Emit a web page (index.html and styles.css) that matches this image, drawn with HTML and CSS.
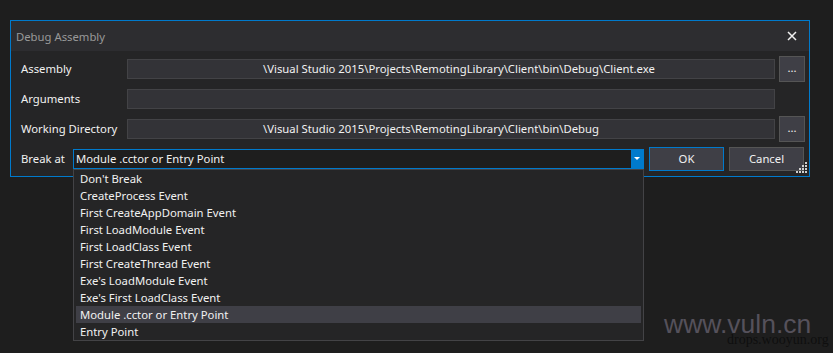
FILE: index.html
```html
<!DOCTYPE html>
<html>
<head>
<meta charset="utf-8">
<link rel="stylesheet" href="styles.css">
</head>
<body>
<div class="dialog">
  <div class="titlebar">
    <span class="title">Debug Assembly</span>
    <svg class="close" width="10" height="10" viewBox="0 0 10 10"><path d="M1 1L9 9M9 1L1 9" stroke="#f1f1f1" stroke-width="1.5" fill="none"/></svg>
  </div>
  <div class="content">
    <div class="row">
      <span class="label">Assembly</span>
      <div class="textbox"><span class="path">\Visual Studio 2015\Projects\RemotingLibrary\Client\bin\Debug\Client.exe</span></div>
      <div class="browse">...</div>
    </div>
    <div class="row">
      <span class="label">Arguments</span>
      <div class="textbox"></div>
    </div>
    <div class="row">
      <span class="label">Working Directory</span>
      <div class="textbox"><span class="path">\Visual Studio 2015\Projects\RemotingLibrary\Client\bin\Debug</span></div>
      <div class="browse">...</div>
    </div>
    <div class="row">
      <span class="label short">Break at</span>
      <div class="combo">
        <span class="combo-value">Module .cctor or Entry Point</span>
        <span class="combo-arrow"><svg width="6" height="4" viewBox="0 0 6 4"><path d="M0 0H6L3 3Z" fill="#ffffff"/></svg></span>
      </div>
      <div class="btn btn-default">OK</div>
      <div class="btn">Cancel</div>
    </div>
  </div>
  <svg class="grip" width="12" height="12" viewBox="0 0 12 12">
    <rect x="9" y="0" width="2" height="2" fill="#d0d0d0"/>
    <rect x="6" y="3" width="2" height="2" fill="#d0d0d0"/>
    <rect x="9" y="3" width="2" height="2" fill="#d0d0d0"/>
    <rect x="3" y="6" width="2" height="2" fill="#d0d0d0"/>
    <rect x="6" y="6" width="2" height="2" fill="#d0d0d0"/>
    <rect x="9" y="6" width="2" height="2" fill="#d0d0d0"/>
    <rect x="0" y="9" width="2" height="2" fill="#d0d0d0"/>
    <rect x="3" y="9" width="2" height="2" fill="#d0d0d0"/>
    <rect x="6" y="9" width="2" height="2" fill="#d0d0d0"/>
    <rect x="9" y="9" width="2" height="2" fill="#d0d0d0"/>
  </svg>
  <ul class="dropdown">
    <li>Don't Break</li>
    <li>CreateProcess Event</li>
    <li>First CreateAppDomain Event</li>
    <li>First LoadModule Event</li>
    <li>First LoadClass Event</li>
    <li>First CreateThread Event</li>
    <li>Exe's LoadModule Event</li>
    <li>Exe's First LoadClass Event</li>
    <li class="selected">Module .cctor or Entry Point</li>
    <li>Entry Point</li>
  </ul>
</div>
<div class="watermark">
  <span class="wm-big">www.vuln.cn</span>
  <span class="wm-small">drops.wooyun.org</span>
</div>
</body>
</html>
```
FILE: styles.css
```css
html, body {
  margin: 0;
  padding: 0;
}
body {
  width: 833px;
  height: 353px;
  background: #1e1e1e;
  font-family: "Noto Sans", "Open Sans", sans-serif;
  font-size: 11.3px;
  color: #f1f1f1;
  overflow: hidden;
  position: relative;
  padding: 20px 0 0 10px;
  box-sizing: border-box;
}
.dialog {
  position: relative;
  width: 800px;
  border: 1px solid #007acc;
  box-sizing: border-box;
  background: #252526;
}
.titlebar {
  height: 30px;
  background: #2d2d30;
  display: flex;
  align-items: center;
  justify-content: space-between;
  padding: 0 12px 0 5px;
}
.title {
  color: #999999;
  line-height: 14px;
  margin-top: 1px;
}
.close {
  display: block;
}
.content {
  padding: 3px 4px 2px 10px;
  display: flex;
  flex-direction: column;
}
.row {
  height: 30px;
  display: flex;
  align-items: center;
}
.label {
  width: 106px;
  flex: none;
  line-height: 14px;
  white-space: nowrap;
}
.label.short {
  width: 52px;
}
.textbox {
  width: 648px;
  height: 20px;
  box-sizing: border-box;
  background: #333337;
  border: 1px solid #434346;
  display: flex;
  align-items: center;
  padding-left: 135px;
  white-space: nowrap;
  overflow: hidden;
}
.path {
  line-height: 14px;
}
.browse {
  width: 26px;
  height: 26px;
  box-sizing: border-box;
  margin-left: 4px;
  background: #3f3f46;
  border: 1px solid #555555;
  display: flex;
  align-items: center;
  justify-content: center;
  line-height: 12px;
  padding-bottom: 2px;
}
.combo {
  width: 571px;
  height: 20px;
  box-sizing: border-box;
  border: 1px solid #007acc;
  background: #1e1e1e;
  display: flex;
  align-items: center;
  justify-content: space-between;
}
.combo-value {
  padding-left: 2px;
  line-height: 14px;
}
.combo-arrow {
  width: 12px;
  height: 18px;
  background: #007acc;
  display: flex;
  align-items: center;
  justify-content: center;
}
.combo-arrow svg {
  display: block;
}
.btn {
  width: 75px;
  height: 24px;
  box-sizing: border-box;
  margin-left: 5px;
  background: #3f3f46;
  border: 1px solid #555555;
  display: flex;
  align-items: center;
  justify-content: center;
  line-height: 14px;
}
.btn-default {
  border-color: #007acc;
}
.grip {
  position: absolute;
  right: 1px;
  bottom: 2px;
}
.dropdown {
  position: absolute;
  left: 62px;
  top: 148px;
  width: 571px;
  margin: 0;
  padding: 0 2px;
  list-style: none;
  box-sizing: border-box;
  background: #252526;
  border: 1px solid #434346;
}
.dropdown li {
  height: 17px;
  line-height: 17px;
  padding-left: 4px;
  white-space: nowrap;
}
.dropdown li.selected {
  background: #3f3f46;
}
.watermark {
  position: absolute;
  left: 654px;
  top: 308px;
  width: 179px;
  height: 45px;
}
.wm-big {
  position: absolute;
  left: 10px;
  top: 6px;
  font-family: "Liberation Sans", Arial, sans-serif;
  font-size: 26.5px;
  line-height: 20px;
  color: #55515b;
}
.wm-small {
  position: absolute;
  left: 73px;
  top: 26px;
  font-family: "Liberation Serif", "Times New Roman", serif;
  font-size: 14px;
  line-height: 12px;
  color: #0f0f0f;
}
```
